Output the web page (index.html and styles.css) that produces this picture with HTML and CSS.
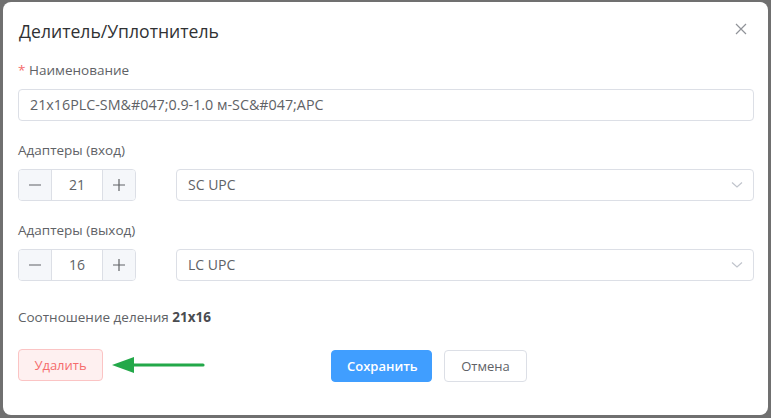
FILE: index.html
```html
<!DOCTYPE html>
<html lang="ru">
<head>
<meta charset="utf-8">
<link rel="stylesheet" href="styles.css">
</head>
<body>
<div class="modal">
  <div class="header">
    <span class="title">Делитель/Уплотнитель</span>
    <svg class="close" width="12" height="12" viewBox="0 0 12 12"><path d="M1 1L11 11M11 1L1 11" stroke="#909399" stroke-width="1.2" fill="none"/></svg>
  </div>
  <div class="body">
    <div class="label first"><span class="req">*</span> Наименование</div>
    <div class="input">21x16PLC-SM&amp;#047;0.9-1.0 м-SC&amp;#047;APC</div>

    <div class="label gap">Адаптеры (вход)</div>
    <div class="row">
      <div class="num">
        <span class="nbtn"><svg width="12" height="12" viewBox="0 0 12 12"><path d="M0 6H12" stroke="#606266" stroke-width="1.2"/></svg></span>
        <span class="nval">21</span>
        <span class="nbtn nbtn-r"><svg width="12" height="12" viewBox="0 0 12 12"><path d="M0 6H12M6 0V12" stroke="#606266" stroke-width="1.2"/></svg></span>
      </div>
      <div class="select">SC UPC<svg class="chev" width="12" height="8" viewBox="0 0 12 8"><path d="M1 1.5L6 6L11 1.5" stroke="#c0c4cc" stroke-width="1.2" fill="none"/></svg></div>
    </div>

    <div class="label gap">Адаптеры (выход)</div>
    <div class="row">
      <div class="num">
        <span class="nbtn"><svg width="12" height="12" viewBox="0 0 12 12"><path d="M0 6H12" stroke="#606266" stroke-width="1.2"/></svg></span>
        <span class="nval">16</span>
        <span class="nbtn nbtn-r"><svg width="12" height="12" viewBox="0 0 12 12"><path d="M0 6H12M6 0V12" stroke="#606266" stroke-width="1.2"/></svg></span>
      </div>
      <div class="select">LC UPC<svg class="chev" width="12" height="8" viewBox="0 0 12 8"><path d="M1 1.5L6 6L11 1.5" stroke="#c0c4cc" stroke-width="1.2" fill="none"/></svg></div>
    </div>

    <div class="ratio">Соотношение деления <b>21x16</b></div>

    <div class="footer">
      <button class="btn btn-del">Удалить</button>
      <svg class="arrow" width="96" height="20" viewBox="0 0 96 20"><path d="M20 10H91" stroke="#23a849" stroke-width="3.2" stroke-linecap="round"/><path d="M0 10L22 2V18Z" fill="#23a849"/></svg>
      <div class="actions">
        <button class="btn btn-save">Сохранить</button>
        <button class="btn btn-cancel">Отмена</button>
      </div>
    </div>
  </div>
</div>
</body>
</html>
```
FILE: styles.css
```css
html, body { margin: 0; padding: 0; }
body {
  background: #707070;
  font-family: "Open Sans", "Noto Sans", sans-serif;
  font-size: 13.5px;
  color: #606266;
  width: 771px;
  height: 418px;
  overflow: hidden;
}
.modal {
  margin: 2px 3px 0 3px;
  width: 765px;
  height: 413px;
  background: #fff;
  border-radius: 8px;
  box-sizing: border-box;
  position: relative;
}
.header {
  padding: 17px 15px 0 16px;
  display: flex;
  justify-content: space-between;
  align-items: flex-start;
}
.title {
  font-size: 17.6px;
  line-height: 24px;
  color: #303133;
}
.close { margin-top: 4px; margin-right: 6px; }
.body { padding: 17px 14px 0 15px; }
.label {
  line-height: 20px;
  margin-bottom: 8px;
}
.label.first { margin-bottom: 9px; }
.label.gap { margin-top: 19px; margin-bottom: 9px; }
.req { color: #f56c6c; }
.input, .select {
  height: 32px;
  box-sizing: border-box;
  border: 1px solid #dcdfe6;
  border-radius: 4px;
  padding: 0 11px;
  line-height: 30px;
  color: #606266;
  font-size: 14.3px;
}
.row { display: flex; gap: 40px; }
.num {
  width: 118px;
  height: 32px;
  box-sizing: border-box;
  border: 1px solid #dcdfe6;
  border-radius: 4px;
  display: flex;
  overflow: hidden;
}
.nbtn {
  width: 32px;
  background: #f5f7fa;
  border-right: 1px solid #dcdfe6;
  display: flex;
  align-items: center;
  justify-content: center;
}
.nbtn-r { border-right: 0; border-left: 1px solid #dcdfe6; }
.nval {
  flex: 1;
  text-align: center;
  line-height: 30px;
  font-size: 14px;
}
.select {
  flex: 1;
  display: flex;
  align-items: center;
  justify-content: space-between;
  padding-right: 10px;
  font-size: 14px;
}
.ratio {
  margin-top: 26px;
  line-height: 20px;
}
.ratio b { color: #4a4c50; font-weight: 700; }
.footer {
  margin-top: 21px;
  display: flex;
  align-items: center;
  position: relative;
}
.btn {
  font-family: "Open Sans", "Noto Sans", sans-serif;
  font-size: 13px;
  height: 32px;
  border-radius: 4px;
  padding: 0 15px;
  box-sizing: border-box;
  cursor: pointer;
}
.btn-del {
  width: 85px;
  background: #fef0f0;
  border: 1px solid #fbc4c4;
  color: #f56c6c;
}
.arrow { position: absolute; left: 94px; top: 7px; }
.actions { margin-left: 228px; margin-top: 2px; display: flex; gap: 12px; }
.btn-save {
  width: 101px;
  background: #409eff;
  border: 1px solid #409eff;
  color: #fff;
  font-weight: 600;
}
.btn-cancel {
  width: 83px;
  background: #fff;
  border: 1px solid #dcdfe6;
  color: #606266;
}
```
